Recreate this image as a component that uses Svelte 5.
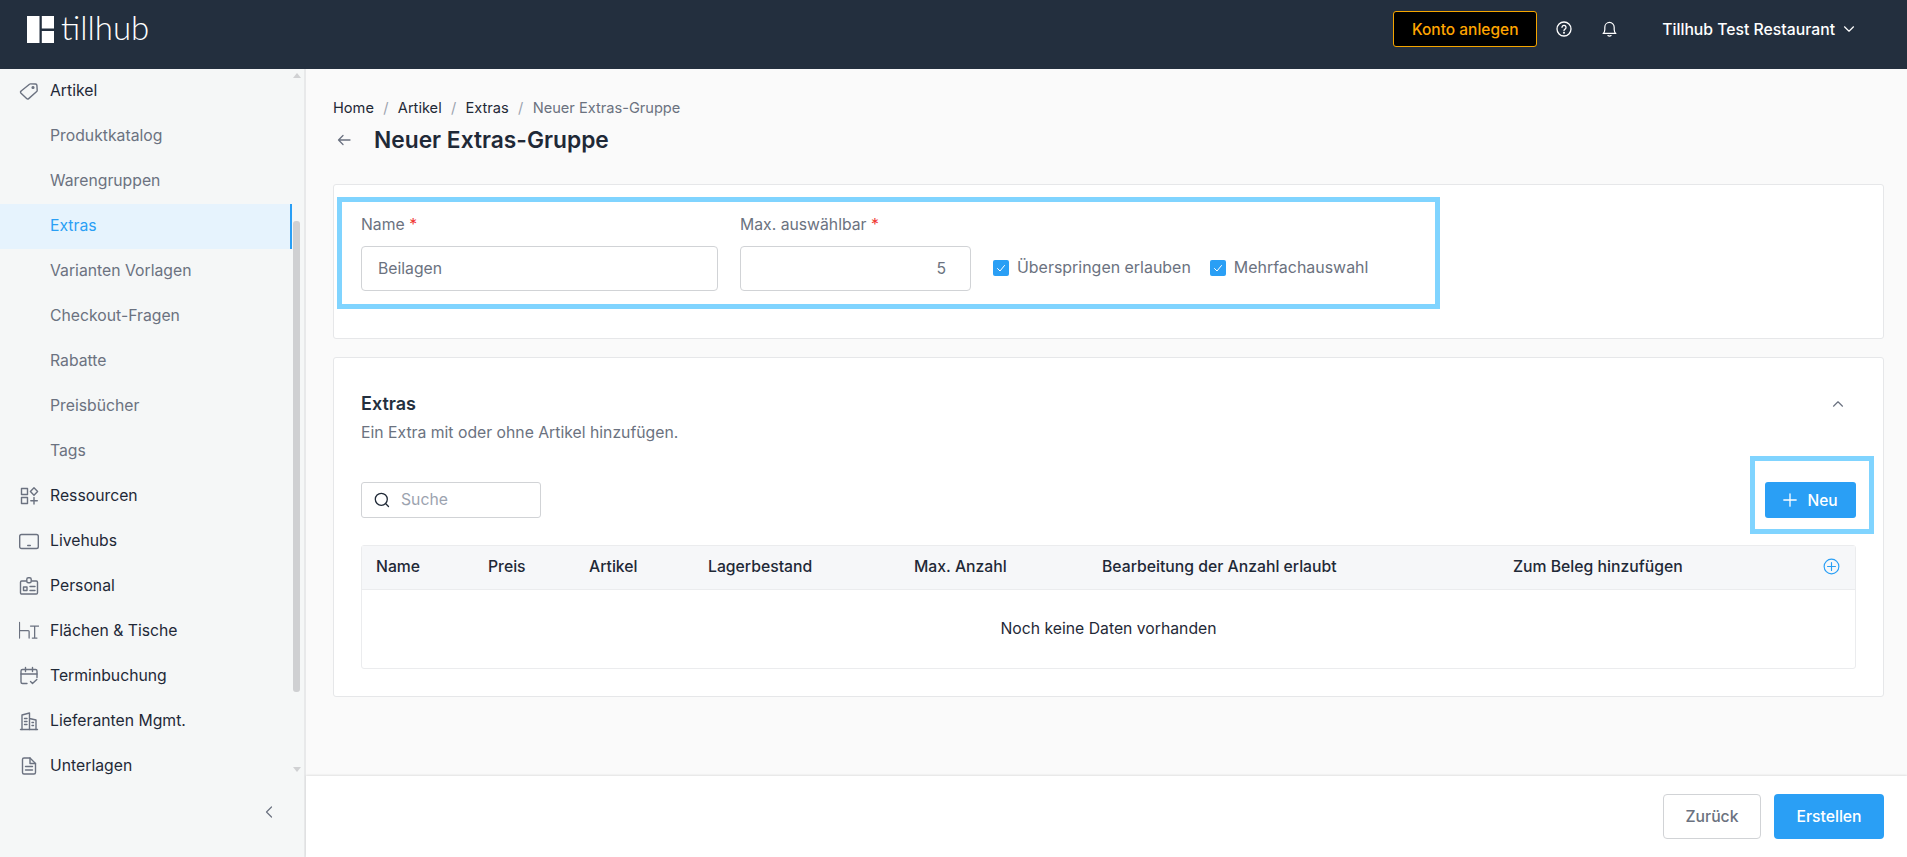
<script>
	const catalogue = ['Produktkatalog', 'Warengruppen', 'Extras', 'Varianten Vorlagen', 'Checkout-Fragen', 'Rabatte', 'Preisbücher', 'Tags'];
	const sections = [
		{ label: 'Ressourcen', icon: 'res' },
		{ label: 'Livehubs', icon: 'tablet' },
		{ label: 'Personal', icon: 'badge' },
		{ label: 'Flächen & Tische', icon: 'table' },
		{ label: 'Terminbuchung', icon: 'cal' },
		{ label: 'Lieferanten Mgmt.', icon: 'building' },
		{ label: 'Unterlagen', icon: 'file' }
	];
	const columns = [
		{ label: 'Name', width: 112 },
		{ label: 'Preis', width: 101 },
		{ label: 'Artikel', width: 119 },
		{ label: 'Lagerbestand', width: 206 },
		{ label: 'Max. Anzahl', width: 188 },
		{ label: 'Bearbeitung der Anzahl erlaubt', width: 411 },
		{ label: 'Zum Beleg hinzufügen', width: 310 }
	];
</script>

{#snippet navIcon(name)}
	<svg class="nav-icon" viewBox="0 0 20 20" fill="none" stroke="currentColor" stroke-width="1.4" stroke-linecap="round" stroke-linejoin="round">
		{#if name === 'tag'}
			<path d="M1.5 10.5 10.5 3.2a1.5 1.5 0 0 1 1-.3l5 .1a1.5 1.5 0 0 1 1.4 1.4l.3 5a1.5 1.5 0 0 1-.5 1.2l-8 7a1.5 1.5 0 0 1-2.1-.1l-5.8-5.5a1 1 0 0 1 .2-1.5z" />
			<circle cx="14" cy="6.5" r=".9" fill="currentColor" />
		{:else if name === 'res'}
			<rect x="2.5" y="2.5" width="6" height="6" />
			<rect x="2.5" y="11.5" width="6" height="6" />
			<path d="m15 1.8 3.6 3.7-3.6 3.7-3.6-3.7z" />
			<path d="M15 11.5v6.5M11.8 14.7h6.5" />
		{:else if name === 'tablet'}
			<rect x="0.7" y="3.5" width="18.6" height="14" rx="1.8" />
			<path d="M8.7 14.5h2.6" />
		{:else if name === 'badge'}
			<rect x="1.5" y="5" width="17" height="13" rx="1.2" />
			<rect x="7.8" y="1.8" width="4.4" height="5" rx="1.5" fill="#f5f7f7" />
			<rect x="4.5" y="11" width="3.5" height="3.5" />
			<path d="M11 10.5h5M11 14.5h5" />
		{:else if name === 'table'}
			<path d="M.5 1.5v17M.5 10.5h9.5a1 1 0 0 1 1 1v7M12.500 5.500h9M17 5.500v13M14.500 18.500h5" transform="scale(.92 .92)" />
		{:else if name === 'cal'}
			<path d="M8 17.500H3.500A1.500 1.500 0 0 1 2 16V5a1.500 1.500 0 0 1 1.500-1.500h13A1.500 1.500 0 0 1 18 5v6.500" />
			<path d="M2 8h16M6.500 1.500v4M13.500 1.500v4" />
			<path d="m11.500 15.500 2 2 4.300-4" />
		{:else if name === 'building'}
			<path d="M1.500 18.500h17" />
			<path d="M3 18.500V4l7.500-2v16.500M10.500 7.500 17 9v9.500" />
			<path d="M5.500 7.500h2.500M5.500 10.500h2.500M5.500 13.500h2.500M13 11.500h1.500M13 14.500h1.500" />
		{:else if name === 'file'}
			<path d="M3.500 3.500A1.500 1.500 0 0 1 5 2h6l5.500 5.500V16.500A1.500 1.500 0 0 1 15 18H5a1.500 1.500 0 0 1-1.500-1.500z" />
			<path d="M11 2v5.500h5.500M6.500 10.500h7M6.500 14h7" />
		{/if}
	</svg>
{/snippet}

<div class="app">
	<header class="topbar">
		<div class="brand">
			<svg class="logo" viewBox="0 0 27 27" fill="#fff">
				<rect x="0" y="0" width="12.5" height="27" />
				<rect x="14.8" y="0" width="12.2" height="12.5" />
				<rect x="14.8" y="15" width="12.2" height="12" />
			</svg>
			<span class="wordmark">tillhub</span>
		</div>
		<div class="top-actions">
			<button class="signup">Konto anlegen</button>
			<svg class="help" viewBox="0 0 16 16" fill="none" stroke="#fff" stroke-width="1.3" stroke-linecap="round">
				<circle cx="8" cy="8" r="7" />
				<path d="M6 6.300a2 2 0 1 1 3 1.800c-.7.4-1 .8-1 1.500" />
				<circle cx="8" cy="11.7" r=".4" fill="#fff" />
			</svg>
			<svg class="bell" viewBox="0 0 16 17" fill="none" stroke="#fff" stroke-width="1.3" stroke-linecap="round" stroke-linejoin="round">
				<path d="M1.2 13.200c1.300-1 1.800-2.400 1.800-4.200V6.500a5 5 0 0 1 10 0V9c0 1.800.5 3.200 1.800 4.200z" />
				<path d="M6.300 15.500c.9.7 2.500.7 3.400 0" />
			</svg>
			<span class="account">Tillhub Test Restaurant</span>
			<svg class="account-caret" viewBox="0 0 12 8" fill="none" stroke="#fff" stroke-width="1.2" stroke-linecap="round" stroke-linejoin="round">
				<path d="m1.500 1.800 4.500 4.400 4.500-4.400" />
			</svg>
		</div>
	</header>

	<div class="body">
		<aside class="sidebar">
			<div class="nav-wrap">
				<nav class="nav">
					<div class="nav-row section">{@render navIcon('tag')}<span>Artikel</span></div>
					{#each catalogue as item}
						<div class="nav-row sub" class:active={item === 'Extras'}><span>{item}</span></div>
					{/each}
					{#each sections as s}
						<div class="nav-row section">{@render navIcon(s.icon)}<span>{s.label}</span></div>
					{/each}
				</nav>
				<div class="scrollbar">
					<i class="arrow up"></i>
					<i class="thumb"></i>
					<i class="arrow down"></i>
				</div>
			</div>
			<div class="collapse">
				<svg viewBox="0 0 8 12" fill="none" stroke="#6b7280" stroke-width="1.2" stroke-linecap="round" stroke-linejoin="round">
					<path d="M6.500 1 1.500 6l5 5" />
				</svg>
			</div>
		</aside>

		<main class="main">
			<div class="content">
				<div class="crumbs">
					<a href="#home">Home</a><span class="sep">/</span>
					<a href="#artikel">Artikel</a><span class="sep">/</span>
					<a href="#extras">Extras</a><span class="sep">/</span>
					<span class="current">Neuer Extras-Gruppe</span>
				</div>
				<div class="title-row">
					<svg class="back" viewBox="0 0 14 12" fill="none" stroke="#6b7280" stroke-width="1.3" stroke-linecap="round" stroke-linejoin="round">
						<path d="M13 6H1.500M6 1.500 1.500 6 6 10.500" />
					</svg>
					<h1>Neuer Extras-Gruppe</h1>
				</div>

				<section class="card form-card">
					<div class="mark mark-form"></div>
					<div class="field name-field">
						<label for="group-name">Name <em>*</em></label>
						<input id="group-name" value="Beilagen" />
					</div>
					<div class="field max-field">
						<label for="group-max">Max. auswählbar <em>*</em></label>
						<input id="group-max" class="num" value="5" />
					</div>
					<div class="checks">
						<div class="check"><span class="box"><svg viewBox="0 0 12 12" fill="none" stroke="#fff" stroke-width="1" stroke-linecap="round" stroke-linejoin="round"><path d="m2.500 6.500 2.500 2.500 4.500-5.500" /></svg></span><span class="check-text">Überspringen erlauben</span></div>
						<div class="check"><span class="box"><svg viewBox="0 0 12 12" fill="none" stroke="#fff" stroke-width="1" stroke-linecap="round" stroke-linejoin="round"><path d="m2.500 6.500 2.500 2.500 4.500-5.500" /></svg></span><span class="check-text">Mehrfachauswahl</span></div>
					</div>
				</section>

				<section class="card extras-card">
					<div class="mark mark-new"></div>
					<div class="extras-head">
						<div>
							<h2>Extras</h2>
							<p>Ein Extra mit oder ohne Artikel hinzufügen.</p>
						</div>
						<svg class="fold" viewBox="0 0 12 8" fill="none" stroke="#6b7280" stroke-width="1.2" stroke-linecap="round" stroke-linejoin="round">
							<path d="m1.500 6.200 4.500-4.400 4.500 4.400" />
						</svg>
					</div>
					<div class="tools">
						<div class="search">
							<svg viewBox="0 0 16 16" fill="none" stroke="#1f2937" stroke-width="1.3" stroke-linecap="round">
								<circle cx="7.300" cy="7.300" r="6" />
								<path d="m11.800 11.800 2.700 2.700" />
							</svg>
							<span>Suche</span>
						</div>
						<button class="new">
							<svg viewBox="0 0 14 14" fill="none" stroke="#fff" stroke-width="1.3" stroke-linecap="round">
								<path d="M7 .8v12.400M.8 7h12.400" />
							</svg>
							Neu
						</button>
					</div>
					<div class="table">
						<div class="thead">
							{#each columns as c}
								<div class="th" style="width: {c.width}px">{c.label}</div>
							{/each}
							<svg class="add-col" viewBox="0 0 18 18" fill="none" stroke="#2a9ff5" stroke-width="1.2" stroke-linecap="round">
								<circle cx="9" cy="9" r="7.800" />
								<path d="M9 4.800v8.400M4.800 9h8.400" />
							</svg>
						</div>
						<div class="empty">Noch keine Daten vorhanden</div>
					</div>
				</section>
			</div>

			<footer class="footer">
				<button class="btn ghost">Zurück</button>
				<button class="btn primary">Erstellen</button>
			</footer>
		</main>
	</div>
</div>

<style>
	:global(body) {
		margin: 0;
		font-family: Inter, "Liberation Sans", sans-serif;
		color: #1f2937;
	}

	button {
		font-family: inherit;
		cursor: pointer;
	}

	.app {
		display: flex;
		flex-direction: column;
		height: 857px;
		overflow: hidden;
	}

	.topbar {
		height: 69px;
		flex: none;
		background: #232f3e;
		display: flex;
		align-items: center;
		justify-content: space-between;
		padding: 0 52px 11px 27px;
		box-sizing: border-box;
	}

	.brand {
		display: flex;
		align-items: center;
		gap: 7px;
	}

	.logo {
		width: 27px;
		height: 27px;
	}

	.wordmark {
		font-family: Lato, sans-serif;
		font-weight: 300;
		font-size: 33px;
		line-height: 27px;
		color: #fff;
		margin-bottom: 4px;
	}

	.top-actions {
		display: flex;
		align-items: center;
	}

	.signup {
		width: 144px;
		height: 36px;
		background: #000;
		border: 1px solid #f5a500;
		border-radius: 3px;
		color: #ffa500;
		font-size: 15.5px;
		font-weight: 500;
		padding: 0;
	}

	.help {
		width: 16px;
		height: 16px;
		margin-left: 19px;
	}

	.bell {
		width: 15px;
		height: 16px;
		margin-left: 30px;
	}

	.account {
		margin-left: 45px;
		color: #fff;
		font-size: 15.75px;
		font-weight: 500;
	}

	.account-caret {
		width: 12px;
		height: 8px;
		margin-left: 8px;
	}

	.body {
		flex: 1;
		display: flex;
		min-height: 0;
	}

	.sidebar {
		width: 306px;
		flex: none;
		box-sizing: border-box;
		background: #f5f7f7;
		border-right: 2px solid #e8e9ea;
		display: flex;
		flex-direction: column;
	}

	.nav-wrap {
		height: 707px;
		flex: none;
		display: flex;
		overflow: hidden;
	}

	.nav {
		width: 292px;
		flex: none;
	}

	.nav-row {
		height: 45px;
		display: flex;
		align-items: center;
		font-size: 15.75px;
		box-sizing: border-box;
		padding-bottom: 2px;
	}

	.section {
		color: #1f2937;
		padding-left: 19px;
		gap: 11px;
	}

	.nav-icon {
		width: 20px;
		height: 20px;
		flex: none;
		color: #6b7280;
	}

	.sub {
		color: #6b7280;
		padding-left: 50px;
	}

	.active {
		background: #e6f3fd;
		color: #2a9ff5;
		border-right: 2px solid #2a9ff5;
	}

	.scrollbar {
		flex: 1;
		display: flex;
		flex-direction: column;
		align-items: center;
		padding-right: 3px;
		position: relative;
	}

	.arrow {
		width: 0;
		height: 0;
		border-left: 4px solid transparent;
		border-right: 4px solid transparent;
		flex: none;
	}

	.arrow.up {
		border-bottom: 5px solid #d0d1d3;
		margin-top: 4px;
	}

	.arrow.down {
		border-top: 5px solid #d0d1d3;
		margin-top: 75px;
	}

	.thumb {
		width: 7px;
		height: 471px;
		flex: none;
		margin-top: 143px;
		border-radius: 3px;
		background: #cfd0d2;
	}

	.collapse {
		flex: 1;
		display: flex;
		justify-content: flex-end;
		align-items: center;
		padding-right: 31px;
		padding-bottom: 9px;
	}

	.collapse svg {
		width: 8px;
		height: 12px;
	}

	.main {
		flex: 1;
		min-width: 0;
		display: flex;
		flex-direction: column;
		background: #fafafa;
	}

	.content {
		flex: 1;
		min-height: 0;
		padding: 30px 23px 0 27px;
	}

	.crumbs {
		height: 18px;
		font-size: 14.625px;
		line-height: 18px;
		display: flex;
	}

	.crumbs a {
		color: #1f2937;
		text-decoration: none;
	}

	.sep {
		color: #9ca3af;
		margin: 0 9.300px;
	}

	.current {
		color: #6b7280;
	}

	.title-row {
		display: flex;
		align-items: center;
		margin-top: 10px;
		height: 26px;
	}

	.back {
		width: 14px;
		height: 12px;
		margin-left: 4px;
	}

	h1 {
		margin: 0 0 0 23px;
		font-size: 22.75px;
		line-height: 26px;
		font-weight: 600;
	}

	.card {
		position: relative;
		background: #fff;
		border: 1px solid #e6e7e9;
		border-radius: 3px;
		box-sizing: border-box;
	}

	.mark {
		position: absolute;
		border: 5px solid #80d4ff;
		box-sizing: border-box;
		pointer-events: none;
	}

	.mark-form {
		left: 3px;
		top: 12px;
		width: 1103px;
		height: 112px;
	}

	.mark-new {
		right: 9px;
		top: 98px;
		width: 124px;
		height: 78px;
	}

	.form-card {
		height: 155px;
		margin-top: 31px;
		padding: 31px 27px 0;
		display: flex;
		align-items: flex-start;
	}

	.field {
		display: flex;
		flex-direction: column;
		gap: 13px;
	}

	.name-field {
		width: 357px;
	}

	.max-field {
		width: 231px;
		margin-left: 22px;
	}

	label {
		font-size: 15.75px;
		line-height: 17px;
		color: #6b7280;
	}

	label em {
		color: #f0342f;
		font-style: normal;
	}

	input {
		height: 45px;
		box-sizing: border-box;
		width: 100%;
		border: 1px solid #d1d3d6;
		border-radius: 4px;
		padding: 0 16px;
		font-family: inherit;
		font-size: 15.75px;
		color: #6b7280;
		background: #fff;
		outline: none;
	}

	.num {
		text-align: right;
		padding-right: 24px;
	}

	.checks {
		display: flex;
		gap: 19px;
		margin: 29px 0 0 22px;
		height: 45px;
		align-items: center;
	}

	.check {
		display: flex;
		align-items: center;
		gap: 8px;
		font-size: 15.95px;
		color: #6b7280;
	}

	.box {
		width: 16px;
		height: 16px;
		background: #2a9ff5;
		border-radius: 2px;
		display: flex;
		align-items: center;
		justify-content: center;
	}

	.box svg {
		width: 12px;
		height: 12px;
	}

	.extras-card {
		height: 340px;
		margin-top: 18px;
		padding: 36px 27px 0;
	}

	.extras-head {
		display: flex;
		justify-content: space-between;
		align-items: flex-start;
	}

	h2 {
		margin: 0;
		font-size: 18px;
		line-height: 20px;
		font-weight: 600;
		color: #232f3e;
	}

	.extras-head p {
		margin: 9px 0 -1px;
		font-size: 15.75px;
		line-height: 20px;
		color: #6b7280;
	}

	.fold {
		width: 12px;
		height: 8px;
		margin: 6px 12px 0 0;
	}

	.tools {
		display: flex;
		justify-content: space-between;
		margin-top: 40px;
		height: 36px;
	}

	.search {
		width: 180px;
		height: 36px;
		box-sizing: border-box;
		border: 1px solid #d1d3d6;
		border-radius: 3px;
		display: flex;
		align-items: center;
		gap: 11px;
		padding-left: 12px;
		padding-bottom: 1px;
		font-size: 15.75px;
		color: #9ca3af;
	}

	.search svg {
		width: 16px;
		height: 16px;
	}

	.new {
		width: 91px;
		height: 36px;
		background: #2a9ff5;
		border: 0;
		border-radius: 3px;
		color: #fff;
		font-size: 15.5px;
		font-weight: 500;
		display: flex;
		align-items: center;
		justify-content: center;
		gap: 10px;
		padding: 0;
	}

	.new svg {
		width: 14px;
		height: 14px;
	}

	.table {
		margin-top: 27px;
		border: 1px solid #ebecee;
		border-radius: 3px;
		height: 124px;
		box-sizing: border-box;
	}

	.thead {
		height: 44px;
		display: flex;
		align-items: center;
		background: #f6f7f9;
		border-bottom: 1px solid #ebecee;
		box-sizing: border-box;
		padding-bottom: 2px;
	}

	.th {
		box-sizing: border-box;
		padding-left: 14px;
		flex: none;
		font-size: 15.75px;
		font-weight: 500;
	}

	.add-col {
		width: 17px;
		height: 17px;
		margin-left: 14px;
	}

	.empty {
		height: 78px;
		display: flex;
		align-items: center;
		justify-content: center;
		font-size: 15.75px;
		padding-bottom: 2px;
		box-sizing: border-box;
	}

	.footer {
		height: 81px;
		flex: none;
		background: #fff;
		box-shadow: 0 -1px 2px rgba(0, 0, 0, 0.1);
		display: flex;
		justify-content: flex-end;
		align-items: flex-start;
		gap: 13px;
		padding: 18px 23px 0 0;
		box-sizing: border-box;
	}

	.btn {
		height: 45px;
		border-radius: 4px;
		font-size: 15.75px;
		font-weight: 500;
		padding: 0;
	}

	.ghost {
		width: 98px;
		background: #fff;
		border: 1px solid #d1d3d6;
		color: #6b7280;
	}

	.primary {
		width: 110px;
		background: #2a9ff5;
		border: 0;
		color: #fff;
	}
</style>
